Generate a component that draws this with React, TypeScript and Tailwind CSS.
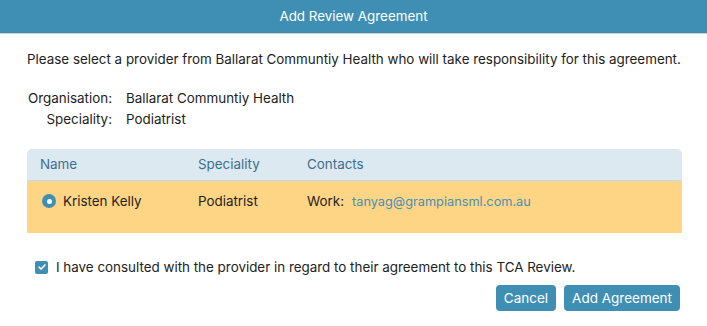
export default function App() {
  return (
    <div className="w-[707px] h-[326px] bg-white text-[13.4px] text-[#222] font-['Inter','Liberation_Sans',sans-serif]">
      <div className="h-[34px] bg-[#3f8fb5] border-b border-[#cfcfcf] flex items-center justify-center text-white">
        Add Review Agreement
      </div>
      <div className="pl-[27px] pr-[25px]">
        <p className="mt-[16px] leading-[18px] whitespace-nowrap">
          Please select a provider from Ballarat Communtiy Health who will take responsibility for this agreement.
        </p>
        <div className="mt-[20px] grid grid-cols-[85px_1fr] gap-x-[14px] leading-[21px] whitespace-nowrap">
          <span className="text-right">Organisation:</span>
          <span>Ballarat Communtiy Health</span>
          <span className="text-right">Speciality:</span>
          <span>Podiatrist</span>
        </div>
        <div className="mt-[19px] rounded-t-[5px] overflow-hidden">
          <div className="h-[32px] bg-[#dde9f1] border-b border-[#bfdcec] flex items-center text-[#3b6f8e]">
            <span className="w-[171px] pl-[13px]">Name</span>
            <span className="w-[109px]">Speciality</span>
            <span>Contacts</span>
          </div>
          <div className="h-[52px] bg-[#fed584] flex items-start pt-[10px]">
            <span className="w-[171px] pl-[15px] flex items-center gap-[7px]">
              <span className="w-[14px] h-[14px] rounded-full bg-[#3f8fb5] flex items-center justify-center">
                <span className="w-[5px] h-[5px] rounded-full bg-white" />
              </span>
              Kristen Kelly
            </span>
            <span className="w-[109px]">Podiatrist</span>
            <span>
              Work:<span className="ml-[8px] text-[12.75px] text-[#4a8fb6]">tanyag@grampiansml.com.au</span>
            </span>
          </div>
        </div>
        <label className="mt-[24px] ml-[8px] flex items-center gap-[8px] whitespace-nowrap">
          <span className="w-[13px] h-[13px] rounded-[2px] bg-[#3f8fb5] flex items-center justify-center">
            <svg viewBox="0 0 12 12" className="w-[10px] h-[10px]" fill="none" stroke="white" strokeWidth="1.8" strokeLinecap="round" strokeLinejoin="round">
              <path d="M2.5 6.2 5 8.5 9.5 3.5" />
            </svg>
          </span>
          I have consulted with the provider in regard to their agreement to this TCA Review.
        </label>
        <div className="mt-[8px] flex justify-end gap-[8px] pr-[2px]">
          <button className="h-[26px] px-[8px] rounded-[4px] bg-[#3f8fb5] text-white text-[13.5px]">Cancel</button>
          <button className="h-[26px] px-[8px] rounded-[4px] bg-[#3f8fb5] text-white text-[13.5px]">Add Agreement</button>
        </div>
      </div>
    </div>
  );
}
